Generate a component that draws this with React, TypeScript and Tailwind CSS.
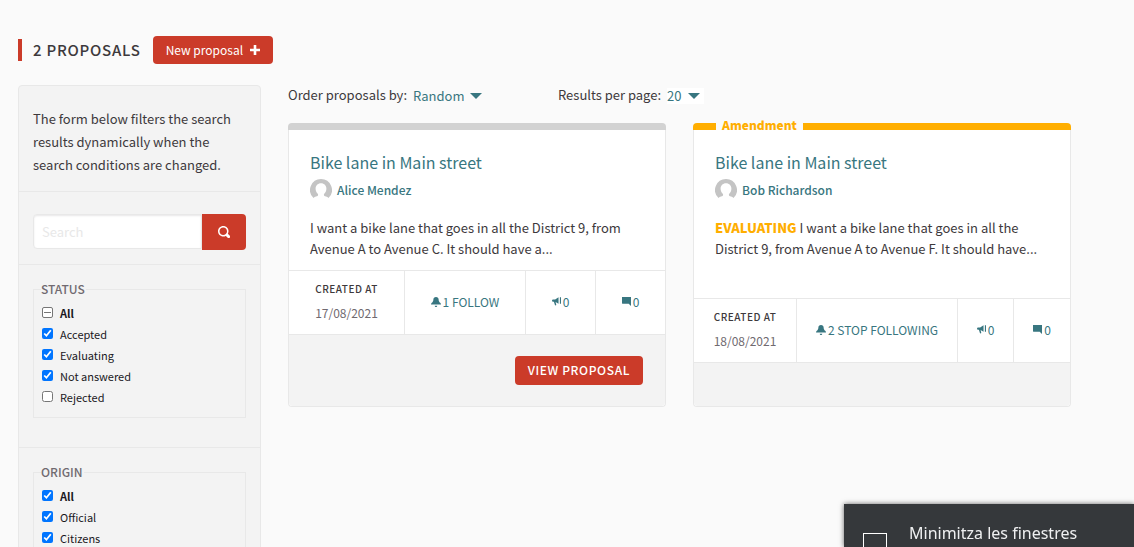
import { useEffect, useRef, type ReactNode } from "react";

type IconProps = { className?: string };

function BellIcon({ className }: IconProps) {
  return (
    <svg viewBox="0 0 8 8" fill="currentColor" className={className} aria-hidden="true">
      <path d="M4 0C2.7 0 1.900.9 1.900 2c0 1.040-.42 1.980-1.240 2.660C.25 5 0 5.480 0 6h8c0-.52-.24-1-.66-1.340C6.520 3.980 6.100 3.040 6.100 2c0-1.100-.8-2-2.100-2zM3 7c0 .55.45 1 1 1s1-.45 1-1H3z" />
    </svg>
  );
}

function BullhornIcon({ className }: IconProps) {
  return (
    <svg viewBox="0 0 8 8" fill="currentColor" className={className} aria-hidden="true">
      <path d="M5.8 .3v5.6L3.2 4.5l.6 2.4c.1.6-.9.9-1.2.3L1.7 4.3H1A1 1 0 0 1 0 3.3a1.1 1.1 0 0 1 1-1.1h1.8zM7 .2h1V6H7z" />
    </svg>
  );
}

function CommentIcon({ className }: IconProps) {
  return (
    <svg viewBox="0 0 8 8" fill="currentColor" className={className} aria-hidden="true">
      <path d="M0 0v5.6c0 .25.2.4.4.4H6l2 2V0z" />
    </svg>
  );
}

function SearchIcon({ className }: IconProps) {
  return (
    <svg viewBox="0 0 8 8" fill="currentColor" className={className} aria-hidden="true">
      <path d="M3.5 0C1.57 0 0 1.57 0 3.5S1.57 7 3.5 7c.59 0 1.17-.14 1.66-.41a1 1 0 0 0 .13.13l1 1a1.02 1.02 0 1 0 1.44-1.44l-1-1a1 1 0 0 0-.16-.13c.27-.49.44-1.06.44-1.66C7.07 1.57 5.45 0 3.5 0zm0 1C4.89 1 6 2.11 6 3.5c0 .66-.24 1.27-.66 1.72l-.16.16C4.74 5.78 4.15 6 3.5 6 2.11 6 1 4.89 1 3.5S2.11 1 3.5 1z" />
    </svg>
  );
}

function PlusIcon({ className }: IconProps) {
  return (
    <svg viewBox="0 0 10 10" fill="currentColor" className={className} aria-hidden="true">
      <path d="M3.7 0h2.6v3.7H10v2.6H6.3V10H3.7V6.3H0V3.7h3.7z" />
    </svg>
  );
}

function Avatar() {
  return (
    <svg viewBox="0 0 22 22" className="size-[22px] shrink-0" aria-hidden="true">
      <path d="M11 0a11 11 0 0 1 7.5 19c-.7-.8-1.5-1.2-2.5-1.5-1.5-.5-2.3-1-2-2.4 1.4-1.2 2.4-3.2 2.4-5.4 0-3.1-2.1-5.5-5.4-5.5S5.6 6.6 5.6 9.7c0 2.2 1 4.2 2.4 5.4.3 1.4-.5 1.9-2 2.4-1 .3-1.8.7-2.5 1.5A11 11 0 0 1 11 0z" fill="#c4c4c4" />
    </svg>
  );
}

function Checkbox({ label, state, bold }: { label: string; state: "on" | "off" | "mixed"; bold?: boolean }) {
  const ref = useRef<HTMLInputElement>(null);
  useEffect(() => {
    if (ref.current) ref.current.indeterminate = state === "mixed";
  }, [state]);
  return (
    <label className="flex h-[21px] items-center gap-[7px] text-[#1a181d]">
      <input
        ref={ref}
        type="checkbox"
        defaultChecked={state === "on"}
        className="-mt-[3px] size-[11px] accent-[#0075ff] indeterminate:appearance-none indeterminate:rounded-[2px] indeterminate:border indeterminate:border-[#767676] indeterminate:bg-white indeterminate:bg-[linear-gradient(#767676,#767676)] indeterminate:bg-[length:7px_1px] indeterminate:bg-center indeterminate:bg-no-repeat"
      />
      <span className={bold ? "font-bold" : ""}>{label}</span>
    </label>
  );
}

function FilterGroup({ title, children }: { title: string; children: ReactNode }) {
  return (
    <div className="border-t border-[#e8e8e8] px-[14px] pt-[15px] pb-[29px]">
      <fieldset className="border border-[#e8e8e8] px-2 pt-[5px] pb-[9px] text-[11px] leading-[21px]">
        <legend className="-ml-px pr-px text-xs leading-[18px] font-medium text-[#706a70]">{title}</legend>
        {children}
      </fieldset>
    </div>
  );
}

function OrderSelect({ id, label, options, className }: { id: string; label: string; options: string[]; className: string }) {
  return (
    <div className="flex items-center gap-[6px] text-[13px] leading-4">
      <label htmlFor={id} className="pb-px">{label}</label>
      <span className={className}>
        <select id={id} className="[field-sizing:content] appearance-none bg-transparent text-[#387680]">
          {options.map((option) => (
            <option key={option}>{option}</option>
          ))}
        </select>
        <svg viewBox="0 0 12 6" className="h-[6px] w-3 fill-[#387680]" aria-hidden="true">
          <path d="M0 0h12L6 6z" />
        </svg>
      </span>
    </div>
  );
}

type Proposal = {
  author: string;
  badge?: string;
  text: string;
  state?: string;
  date: string;
  follow: string;
  action?: string;
  bar: string;
  columns: string;
};

const proposals: Proposal[] = [
  {
    author: "Alice Mendez",
    text: "I want a bike lane that goes in all the District 9, from Avenue A to Avenue C. It should have a...",
    date: "17/08/2021",
    follow: "1 FOLLOW",
    action: "VIEW PROPOSAL",
    bar: "bg-[#d2d2d2]",
    columns: "grid-cols-[115fr_121fr_70fr_70fr]",
  },
  {
    author: "Bob Richardson",
    badge: "Amendment",
    state: "EVALUATING",
    text: "I want a bike lane that goes in all the District 9, from Avenue A to Avenue F. It should have...",
    date: "18/08/2021",
    follow: "2 STOP FOLLOWING",
    bar: "bg-[#ffae00]",
    columns: "grid-cols-[102fr_161fr_56fr_57fr]",
  },
];

function ProposalCard({ proposal }: { proposal: Proposal }) {
  const cell = "flex items-center justify-center gap-[2px] border-l border-[#e8e8e8] pb-[2px] text-[#387680]";
  return (
    <article className="flex flex-col">
      <div className={`relative h-[7px] rounded-t ${proposal.bar}`}>
        {proposal.badge && (
          <span className="absolute -top-[7px] left-[23px] px-[6px] text-xs leading-[17px] font-black text-[#ffae00] [background:linear-gradient(#fafafa_14px,transparent_14px)]">
            {proposal.badge}
          </span>
        )}
      </div>
      <div className="flex grow flex-col rounded-b border border-t-0 border-[#e8e8e8] bg-white">
        <div className="grow px-[21px] pt-[19px] pb-[10px]">
          <h2 className="text-base leading-[26px]">
            <a href="#proposal" className="text-[#387680]">Bike lane in Main street</a>
          </h2>
          <a href="#author" className="mt-1 flex items-center gap-[5px] text-xs leading-[22px] font-medium text-[#387680]">
            <Avatar />
            {proposal.author}
          </a>
          <p className="mt-4 text-[13px] leading-[21px]">
            {proposal.state && <strong className="font-black text-[#ffae00]">{proposal.state} </strong>}
            {proposal.text}
          </p>
        </div>
        <div className={`grid h-16 border-t border-[#e8e8e8] text-xs leading-4 ${proposal.columns}`}>
          <div className="flex flex-col items-center justify-center gap-2 pb-[3px]">
            <span className="text-[10px] font-medium tracking-wider">CREATED AT</span>
            <span className="text-[#706a70]">{proposal.date}</span>
          </div>
          <button type="button" className={cell}>
            <BellIcon className="size-[10px]" />
            {proposal.follow}
          </button>
          <span className={cell}>
            <BullhornIcon className="size-[9px]" />0
          </span>
          <a href="#comments" className={cell}>
            <CommentIcon className="size-[9px]" />0
          </a>
        </div>
        <div className="flex min-h-11 justify-end rounded-b border-t border-[#e8e8e8] bg-[#f3f3f3] px-[22px] py-[21px]">
          {proposal.action && (
            <a href="#view" className="rounded bg-[#cb3b29] px-[13px] pb-px text-xs leading-7 font-medium tracking-wider text-white">
              {proposal.action}
            </a>
          )}
        </div>
      </div>
    </article>
  );
}

export default function App() {
  return (
    <div className="relative h-screen overflow-hidden bg-[#fafafa] pr-[63px] pl-[18px] font-['Noto_Sans_CJK_SC','Noto_Sans',sans-serif] text-[#3d393c]">
      <header className="flex items-center gap-3 pt-9 pb-[21px]">
        <h1 className="border-l-4 border-[#cb3b29] pl-[11px] text-[15px] leading-[22px] font-medium tracking-wider">2 PROPOSALS</h1>
        <button type="button" className="flex h-7 items-center gap-[7px] rounded bg-[#cb3b29] px-[13px] pb-px text-xs text-white">
          New proposal
          <PlusIcon className="size-[10px]" />
        </button>
      </header>

      <div className="grid grid-cols-4 gap-[27px]">
        <aside className="rounded border border-[#e8e8e8] bg-[#f3f3f3]">
          <p className="px-[14px] pt-[21px] pb-[15px] text-[13px] leading-[23px]">
            The form below filters the search results dynamically when the search conditions are changed.
          </p>
          <form className="flex border-t border-[#e8e8e8] px-[14px] pt-[22px] pb-[14px]" onSubmit={(e) => e.preventDefault()}>
            <input
              type="search"
              aria-label="Search"
              placeholder="Search"
              className="h-[35px] min-w-0 grow rounded-l border border-[#e8e8e8] bg-white px-2 text-[13px] shadow-[inset_0_1px_2px_rgba(26,24,29,0.1)] placeholder:text-[#e8e8e8]"
            />
            <button type="submit" aria-label="Search" className="flex h-9 w-11 items-center justify-center rounded-r bg-[#cb3b29] pb-px text-white">
              <SearchIcon className="size-3" />
            </button>
          </form>
          <FilterGroup title="STATUS">
            <Checkbox label="All" state="mixed" bold />
            <Checkbox label="Accepted" state="on" />
            <Checkbox label="Evaluating" state="on" />
            <Checkbox label="Not answered" state="on" />
            <Checkbox label="Rejected" state="off" />
          </FilterGroup>
          <FilterGroup title="ORIGIN">
            <Checkbox label="All" state="on" bold />
            <Checkbox label="Official" state="on" />
            <Checkbox label="Citizens" state="on" />
          </FilterGroup>
        </aside>

        <main className="col-span-3">
          <div className="grid grid-cols-3 gap-[27px] pt-[2px]">
            <OrderSelect id="order" label="Order proposals by:" options={["Random", "Recent"]} className="flex items-center gap-[6px]" />
            <OrderSelect id="per-page" label="Results per page:" options={["20", "50", "100"]} className="flex items-center gap-[6px] bg-white pr-1" />
          </div>
          <div className="mt-[19px] grid min-h-[284px] grid-cols-2 gap-[27px]">
            {proposals.map((proposal) => (
              <ProposalCard key={proposal.author} proposal={proposal} />
            ))}
          </div>
        </main>
      </div>

      <div role="status" className="fixed right-0 bottom-0 flex h-[43px] w-[290px] bg-[#35383b] pl-[19px] font-['Noto_Sans',sans-serif] text-[#eff0f1] shadow-[0_0_5px_rgba(0,0,0,0.6)]">
        <span className="mt-[29px] h-[14px] w-6 border border-b-0 border-white" />
        <span className="ml-[22px] pt-[17px] text-base leading-6">Minimitza les finestres</span>
      </div>
    </div>
  );
}
